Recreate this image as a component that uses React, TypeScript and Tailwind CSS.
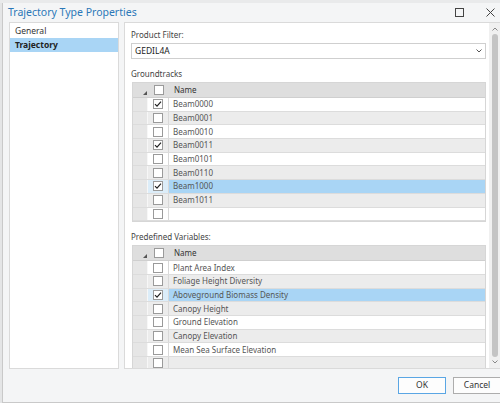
import React from "react";

type Row = { name: string; checked?: boolean; selected?: boolean };

const groundtracks: Row[] = [
    { name: "Beam0000", checked: true },
    { name: "Beam0001" },
    { name: "Beam0010" },
    { name: "Beam0011", checked: true },
    { name: "Beam0101" },
    { name: "Beam0110" },
    { name: "Beam1000", checked: true, selected: true },
    { name: "Beam1011" },
    { name: "" },
];

const variables: Row[] = [
    { name: "Plant Area Index" },
    { name: "Foliage Height Diversity" },
    { name: "Aboveground Biomass Density", checked: true, selected: true },
    { name: "Canopy Height" },
    { name: "Ground Elevation" },
    { name: "Canopy Elevation" },
    { name: "Mean Sea Surface Elevation" },
    { name: "" },
];

const CheckBox = ({ checked }: { checked?: boolean }) => (
    <div className="w-[10px] h-[10px] border border-[#9a9a9a] bg-white flex items-center justify-center">
        {checked && (
            <svg width="8" height="8" viewBox="0 0 8 8">
                <path d="M1 4.2 L3 6.2 L7 1.6" fill="none" stroke="#222" strokeWidth="1.2" />
            </svg>
        )}
    </div>
);

const Grid = ({ rows }: { rows: Row[] }) => (
    <div className="border border-[#d6d6d6] bg-white">
        <div className="flex h-[15px] bg-[#dedede] border-b border-[#cfcfcf]">
            <div className="w-[15px] flex items-end justify-end pb-[2px] pr-[1px]">
                <svg width="4" height="4" viewBox="0 0 4 4">
                    <path d="M4 0 L4 4 L0 4 Z" fill="#555" />
                </svg>
            </div>
            <div className="w-[21px] flex items-center justify-center">
                <CheckBox />
            </div>
            <div className="flex-1 flex items-center pl-[5px] text-[8px] text-[#333]">Name</div>
        </div>
        {rows.map((r, i) => {
            const bg = r.selected ? "bg-[#a9d5f5]" : i % 2 === 0 ? "bg-white" : "bg-[#ececec]";
            return (
                <div key={i} className={`flex h-[13.7px] border-b border-[#dcdcdc] ${bg}`}>
                    <div className="w-[15px] bg-[#e6e6e6] border-r border-[#f7f7f7]" />
                    <div className={`w-[21px] flex items-center justify-center border-r border-[#d8d8d8] ${r.selected ? "bg-[#dcedf9]" : ""}`}>
                        <CheckBox checked={r.checked} />
                    </div>
                    <div className="flex-1 flex items-center pl-[4px] text-[8px] text-[#555] whitespace-nowrap">
                        {r.name}
                    </div>
                </div>
            );
        })}
    </div>
);

export default function App() {
    return (
        <div className="w-[500px] h-[403px] overflow-hidden bg-[#e4e5e6] font-['Noto_Sans','Open_Sans',sans-serif]">
            <div className="h-[3px] bg-[#e9eaeb]" />
            <div className="h-[400px] ml-[2px] bg-[#f4f5f6] border-l border-[#c9c9c9] border-b border-[#bcbcbc] flex flex-col">
                <div className="h-[19px] flex items-center justify-between pl-[5px] pr-[5px]">
                    <span className="text-[10.5px] text-[#2b78b8] leading-none">Trajectory Type Properties</span>
                    <div className="flex items-center gap-[22px]">
                        <svg width="9" height="9" viewBox="0 0 9 9">
                            <rect x="0.5" y="0.5" width="8" height="8" fill="none" stroke="#444" />
                        </svg>
                        <svg width="9" height="9" viewBox="0 0 9 9">
                            <path d="M0.5 0.5 L8.5 8.5 M8.5 0.5 L0.5 8.5" stroke="#444" strokeWidth="1" />
                        </svg>
                    </div>
                </div>
                <div className="h-[347px] flex gap-[5px] pl-[6px]">
                    <div className="w-[110px] bg-white border border-[#dadada] pt-[1px]">
                        <div className="h-[14px] flex items-center pl-[5px] text-[8.5px] text-[#333]">General</div>
                        <div className="h-[14px] flex items-center pl-[5px] text-[8.5px] font-bold text-[#222] bg-[#a9d5f5]">Trajectory</div>
                    </div>
                    <div className="flex-1 flex bg-white border border-[#dadada] border-r-0 overflow-hidden">
                        <div className="flex-1 pl-[6px] pr-[3px] pt-[6px] overflow-hidden">
                            <div className="h-[12px] flex items-center text-[8px] text-[#444]">Product Filter:</div>
                            <div className="mt-[2px] h-[16px] border border-[#cfcfcf] flex items-center justify-between pl-[3px] pr-[3px]">
                                <span className="text-[8.5px] text-[#222]">GEDIL4A</span>
                                <svg width="6" height="4" viewBox="0 0 6 4">
                                    <path d="M0.5 0.5 L3 3 L5.5 0.5" fill="none" stroke="#555" strokeWidth="1" />
                                </svg>
                            </div>
                            <div className="mt-[9px] h-[12px] flex items-center text-[8px] text-[#444]">Groundtracks</div>
                            <div className="mt-[2px] ml-[1px]">
                                <Grid rows={groundtracks} />
                            </div>
                            <div className="mt-[9px] h-[12px] flex items-center text-[8px] text-[#444]">Predefined Variables:</div>
                            <div className="mt-[2px] ml-[1px]">
                                <Grid rows={variables} />
                            </div>
                        </div>
                        <div className="w-[11px] bg-[#f0f0f0] flex flex-col items-center">
                            <svg width="6" height="4" viewBox="0 0 6 4" className="mt-[4px]">
                                <path d="M0.5 3.5 L3 1 L5.5 3.5" fill="none" stroke="#888" strokeWidth="1" />
                            </svg>
                            <div className="w-[6px] flex-1 my-[3px] rounded-full bg-[#c4c4c4]" />
                            <svg width="6" height="4" viewBox="0 0 6 4" className="mb-[4px]">
                                <path d="M0.5 0.5 L3 3 L5.5 0.5" fill="none" stroke="#888" strokeWidth="1" />
                            </svg>
                        </div>
                    </div>
                </div>
                <div className="flex-1 flex items-center justify-end gap-[7px] -mr-[1px]">
                    <button className="w-[48px] h-[17px] border border-[#5aa6e4] bg-[#fdfdfd] text-[8.5px] text-[#333]">OK</button>
                    <button className="w-[48px] h-[17px] border border-[#adadad] bg-[#fdfdfd] text-[8.5px] text-[#333]">Cancel</button>
                </div>
            </div>
        </div>
    );
}
